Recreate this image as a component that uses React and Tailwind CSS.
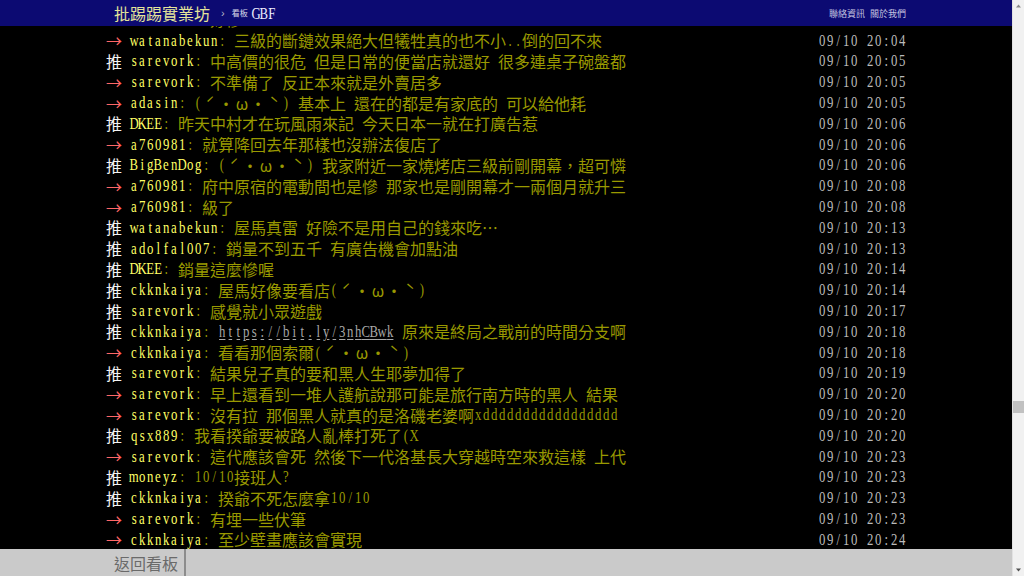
import React from "react";

function Cells({ s, color, under }) {
  return [...s].map((c, i) =>
    c.charCodeAt(0) < 0x7f ? (
      <span key={i} className={`flex w-[8px] shrink-0 justify-center ${color}`}>
        <span className={`inline-block scale-x-[0.75] whitespace-pre font-['Liberation_Serif',serif] text-[17px] leading-none ${under ? "underline underline-offset-2" : ""}`}>{c}</span>
      </span>
    ) : (
      <span key={i} className={`flex w-[16px] shrink-0 justify-center font-['Noto_Sans_CJK_TC',sans-serif] text-[16px] leading-none ${color}`}>{c}</span>
    )
  );
}

const rows = [
  ["→", "sarevork", ": 好慘", "09/10 20:04"],
  ["→", "watanabekun", ": 三級的斷鏈效果絕大但犧牲真的也不小..倒的回不來", "09/10 20:04"],
  ["推", "sarevork", ": 中高價的很危 但是日常的便當店就還好 很多連桌子碗盤都", "09/10 20:05"],
  ["→", "sarevork", ": 不準備了 反正本來就是外賣居多", "09/10 20:05"],
  ["→", "adasin", ": (ˊ・ω・ˋ) 基本上 還在的都是有家底的 可以給他耗", "09/10 20:05"],
  ["推", "DKEE", ": 昨天中村才在玩風雨來記 今天日本一就在打廣告惹", "09/10 20:06"],
  ["→", "a760981", ": 就算降回去年那樣也沒辦法復店了", "09/10 20:06"],
  ["推", "BigBenDog", ": (ˊ・ω・ˋ) 我家附近一家燒烤店三級前剛開幕，超可憐", "09/10 20:06"],
  ["→", "a760981", ": 府中原宿的電動間也是慘 那家也是剛開幕才一兩個月就升三", "09/10 20:08"],
  ["→", "a760981", ": 級了", "09/10 20:08"],
  ["推", "watanabekun", ": 屋馬真雷 好險不是用自己的錢來吃…", "09/10 20:13"],
  ["推", "adolfal007", ": 銷量不到五千 有廣告機會加點油", "09/10 20:13"],
  ["推", "DKEE", ": 銷量這麼慘喔", "09/10 20:14"],
  ["推", "ckknkaiya", ": 屋馬好像要看店(ˊ・ω・ˋ)", "09/10 20:14"],
  ["推", "sarevork", ": 感覺就小眾遊戲", "09/10 20:17"],
  ["推", "ckknkaiya", "LINK", "09/10 20:18"],
  ["→", "ckknkaiya", ": 看看那個索爾(ˊ・ω・ˋ)", "09/10 20:18"],
  ["推", "sarevork", ": 結果兒子真的要和黑人生耶夢加得了", "09/10 20:19"],
  ["→", "sarevork", ": 早上還看到一堆人護航說那可能是旅行南方時的黑人 結果", "09/10 20:20"],
  ["→", "sarevork", ": 沒有拉 那個黑人就真的是洛磯老婆啊xddddddddddddddddd", "09/10 20:20"],
  ["推", "qsx889", ": 我看揆爺要被路人亂棒打死了(X", "09/10 20:20"],
  ["→", "sarevork", ": 這代應該會死 然後下一代洛基長大穿越時空來救這樣 上代", "09/10 20:23"],
  ["推", "moneyz", ": 10/10接班人?", "09/10 20:23"],
  ["推", "ckknkaiya", ": 揆爺不死怎麼拿10/10", "09/10 20:23"],
  ["→", "sarevork", ": 有埋一些伏筆", "09/10 20:23"],
  ["→", "ckknkaiya", ": 至少壁畫應該會實現", "09/10 20:24"],
];

function Row({ tag, user, content, date }) {
  return (
    <div className="flex h-[20.8px] shrink-0 items-center">
      <Cells s={tag + " "} color={tag === "推" ? "text-[#f4f4f4]" : "text-[#ff6666]"} />
      <Cells s={user} color="text-[#ffff66]" />
      {content === "LINK" ? (
        <>
          <Cells s=": " color="text-[#999900]" />
          <Cells s="https://bit.ly/3nhCBwk" color="text-[#a8a8a8]" under />
          <Cells s=" 原來是終局之戰前的時間分支啊" color="text-[#999900]" />
        </>
      ) : (
        <Cells s={content} color="text-[#999900]" />
      )}
      <div className="ml-auto mr-[2px] flex">
        <Cells s={date} color="text-[#bbbbbb]" />
      </div>
    </div>
  );
}

export default function App() {
  return (
    <div className="flex h-[576px] w-[1024px] overflow-hidden bg-black">
      <div className="flex w-[1012px] flex-col">
        <header className="z-10 flex h-[26px] shrink-0 items-center bg-[#0c0a72] pl-[114px] pr-[106px]">
          <span className="font-['Noto_Sans_CJK_TC',sans-serif] text-[16px] leading-none text-[#e4e49a]">批踢踢實業坊</span>
          <span className="ml-[11px] font-['Liberation_Sans',sans-serif] text-[11px] leading-none text-[#b8b8c8]">›</span>
          <span className="ml-[7px] font-['Noto_Sans_CJK_TC',sans-serif] text-[8px] leading-none text-[#d8d8e8]">看板</span>
          <span className="ml-[4px] flex">
            <Cells s="GBF" color="text-[#eeeeff]" />
          </span>
          <div className="ml-auto flex gap-[5px] font-['Noto_Sans_CJK_TC',sans-serif] text-[9px] leading-none text-[#c4c4e0]">
            <span>聯絡資訊</span>
            <span>關於我們</span>
          </div>
        </header>
        <main className="min-h-0 flex-1 overflow-hidden">
          <div className="ml-[106px] mt-[-17px] flex w-[802px] flex-col">
            {rows.map((r, i) => (
              <Row key={i} tag={r[0]} user={r[1]} content={r[2]} date={r[3]} />
            ))}
          </div>
        </main>
        <footer className="z-10 flex h-[27px] shrink-0 bg-[#cacaca]">
          <div className="flex w-[184px] items-center pl-[114px] font-['Noto_Sans_CJK_TC',sans-serif] text-[16px] leading-none text-[#6a6a6a]">
            返回看板
          </div>
          <div className="w-[2px] bg-[#8c8c8c]" />
        </footer>
      </div>
      <div className="flex w-[12px] flex-col border-l border-[#e2e2e2] bg-[#f1f1f1]">
        <div className="flex h-[12px] items-center justify-center">
          <svg width="5" height="4" viewBox="0 0 5 4"><path d="M2.5 0.5 L5 3.5 L0 3.5 Z" fill="#8a8a8a" /></svg>
        </div>
        <div className="h-[389px]" />
        <div className="h-[12px] bg-[#c1c1c1]" />
        <div className="flex-1" />
        <div className="flex h-[12px] items-center justify-center">
          <svg width="5" height="4" viewBox="0 0 5 4"><path d="M0 0.5 L5 0.5 L2.5 3.5 Z" fill="#505050" /></svg>
        </div>
      </div>
    </div>
  );
}
